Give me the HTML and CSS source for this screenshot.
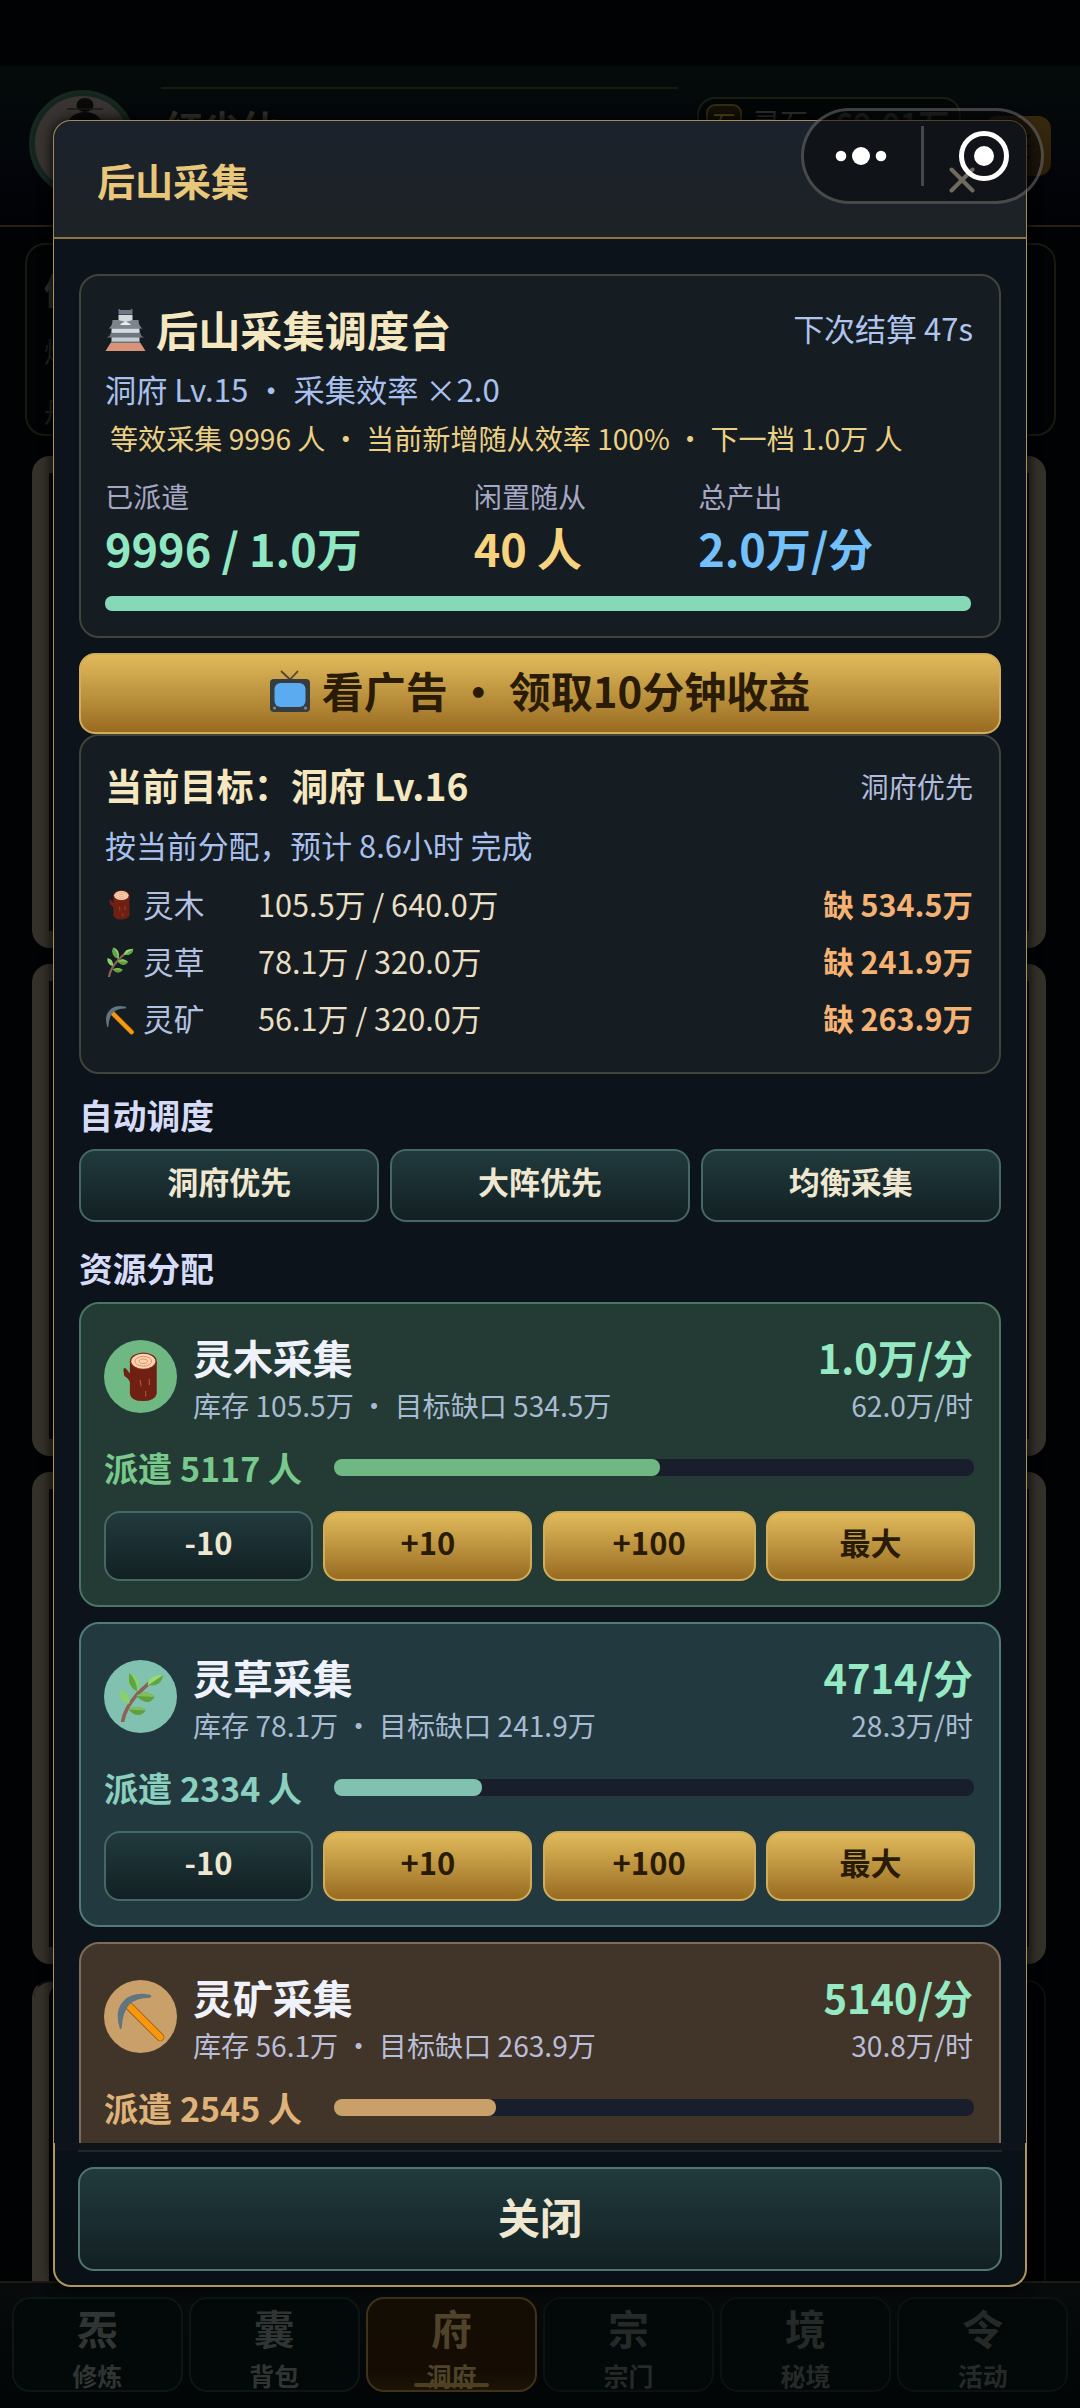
FILE: index.html
```html
<!DOCTYPE html>
<html lang="zh-CN">
<head>
<meta charset="utf-8">
<title>后山采集</title>
<link rel="stylesheet" href="styles.css">
</head>
<body>
<svg class="defs" width="0" height="0" aria-hidden="true">
  <symbol id="log" viewBox="0 0 40 54">
    <path d="M10 26 4 18Q1 16 1 20L2 26Q8 29 10 38Z" fill="#6d2013"/>
    <path d="M8 10V45Q9 53 22 53T37 45V10Z" fill="#6f2012"/>
    <ellipse cx="22.500" cy="10" rx="14.500" ry="9.500" fill="#7c2c1a"/>
    <ellipse cx="22.500" cy="10" rx="13" ry="8" fill="#fbd3b0"/>
    <ellipse cx="22.500" cy="10" rx="9" ry="5.200" fill="none" stroke="#d98d66" stroke-width="1"/>
    <ellipse cx="22.500" cy="10" rx="4.500" ry="2.400" fill="none" stroke="#d98d66" stroke-width="1"/>
    <path d="M19 30q1 6 1 7M29 29v7M25 42v6" stroke="#a5533c" stroke-width="1.300" fill="none"/>
  </symbol>
  <symbol id="herb" viewBox="0 0 46 52">
    <path d="M4 51Q6 38 20 22L31 12" stroke="#8c6257" stroke-width="3.800" fill="none" stroke-linecap="round"/>
    <path d="M19 20Q6 15 11 1Q23 4 21 19Z" fill="#8bd06a"/>
    <path d="M19 20Q19 9 11 1Q8 15 19 20Z" fill="#5da547"/>
    <path d="M30 14Q30 3 46 3Q45 15 30 14Z" fill="#9ed96f"/>
    <path d="M30 14L46 3Q45 15 30 14Z" fill="#5da547"/>
    <path d="M11 33Q0 31 1 19Q12 21 11 33Z" fill="#8bd06a"/>
    <path d="M18 25Q29 17 37 26Q31 37 18 25Z" fill="#5da03d"/>
    <path d="M18 25Q29 17 37 26Z" fill="#83bd58"/>
    <path d="M10 39Q19 33 28 40Q20 50 10 39Z" fill="#5da03d"/>
    <path d="M10 39Q19 33 28 40Z" fill="#83bd58"/>
  </symbol>
  <symbol id="pick" viewBox="0 0 50 52">
    <path d="M12 14 45 47" stroke="#8f5a14" stroke-width="8.600" stroke-linecap="round"/>
    <path d="M12 14 45 47" stroke="#f8970e" stroke-width="7" stroke-linecap="round"/>
    <path d="M3 38Q-3 19 7 9T35 3Q37 5 34 6Q20 6 13 13T5 37Q4 40 3 38Z" fill="#5f7580"/>
  </symbol>
  <symbol id="castle" viewBox="0 0 40 42">
    <path d="M5 34H35L40 42H0Z" fill="#d99379"/>
    <path d="M6 22H34V34H6Z" fill="#c4cdd3"/>
    <path d="M6 32.500H34V34H6Z" fill="#6f757c"/>
    <path d="M1 28.500Q5 27 5 24H35Q35 27 39 28.500Z" fill="#6e7780"/>
    <path d="M3 19.500Q7 17 7 11H33Q33 17 37 19.500Z" fill="#7c858c"/>
    <path d="M6 19.500H34V23H6Z" fill="#d5dade"/>
    <path d="M13 6H27V11L20 13L13 11Z" fill="#d5dade"/>
    <path d="M15 15L20 12.500 25 15V16H15Z" fill="#eceff0"/>
    <path d="M13 0H14L15 1H25L26 0H27V5.500H13Z" fill="#6f7983"/>
  </symbol>
  <symbol id="tv" viewBox="0 0 40 42">
    <path d="M11 1 20 9.500 28 1" fill="none" stroke="#514433" stroke-width="1.800"/>
    <rect y="9" width="40" height="33" rx="4" fill="#373c3f"/>
    <rect x="4.500" y="13" width="31" height="24" rx="6" fill="#5aabef"/>
    <circle cx="4.500" cy="38" r="1.500" fill="#858a8b"/>
    <circle cx="35.500" cy="38" r="1.500" fill="#858a8b"/>
  </symbol>
</svg>

<div class="page">
  <header class="profile">
    <div class="avatar">
      <svg viewBox="0 0 96 96"><path d="M50 96H14Q24 70 30 34Q34 16 50 16T70 34Q76 70 82 96Z" fill="#0a0909"/><ellipse cx="50" cy="9" rx="8.500" ry="7" fill="#0a0909"/><path d="M32 13h36" stroke="#1d1a19" stroke-width="1.500"/></svg>
    </div>
    <div class="profile-info"><div class="rule"></div><div class="nick">红尘仙</div></div>
    <div class="wallet"><span class="coin">石</span><span class="coin-name">灵石</span><b>69.01万</b></div>
    <div class="sign">签</div>
  </header>
  <section class="tips"><b>修炼</b><span>炼丹</span><span>丹药</span></section>
  <section class="scrolls">
    <div class="scroll-card"></div>
    <div class="scroll-card"></div>
    <div class="scroll-card"></div>
    <div class="scroll-card last"></div>
  </section>
  <nav class="tabs">
    <div class="tab"><b>炁</b><span>修炼</span></div>
    <div class="tab"><b>囊</b><span>背包</span></div>
    <div class="tab active"><b>府</b><span>洞府</span></div>
    <div class="tab dim"><b>宗</b><span>宗门</span></div>
    <div class="tab dim"><b>境</b><span>秘境</span></div>
    <div class="tab dim"><b>令</b><span>活动</span></div>
  </nav>
</div>

<div class="modal">
  <div class="modal-head">
    <h1>后山采集</h1>
    <svg class="close" viewBox="0 0 26 26"><path d="M2.500 2.500l21 21M23.500 2.500l-21 21"/></svg>
  </div>
  <div class="modal-body">
    <section class="panel summary">
      <div class="row">
        <h2><svg><use href="#castle"/></svg>后山采集调度台</h2>
        <span class="next">下次结算 47s</span>
      </div>
      <p class="sub">洞府 Lv.15 <i>・</i> 采集效率 ×2.0</p>
      <p class="eff">等效采集 9996 人 <i>・</i> 当前新增随从效率 100% <i>・</i> 下一档 1.0万 人</p>
      <div class="stats">
        <div class="stat mint"><span>已派遣</span><b>9996 / 1.0万</b></div>
        <div class="stat gold"><span>闲置随从</span><b>40 人</b></div>
        <div class="stat blue"><span>总产出</span><b>2.0万/分</b></div>
      </div>
      <div class="total-bar"><div style="width:99.8%"></div></div>
    </section>

    <button class="btn primary ad"><svg><use href="#tv"/></svg>看广告 <i>・</i> 领取10分钟收益</button>

    <section class="panel goal">
      <div class="row">
        <h3>当前目标：洞府 Lv.16</h3>
        <span class="mode">洞府优先</span>
      </div>
      <p class="sub">按当前分配，预计 8.6小时 完成</p>
      <div class="need"><svg><use href="#log"/></svg><span>灵木</span><em>105.5万 / 640.0万</em><b>缺 534.5万</b></div>
      <div class="need"><svg><use href="#herb"/></svg><span>灵草</span><em>78.1万 / 320.0万</em><b>缺 241.9万</b></div>
      <div class="need"><svg><use href="#pick"/></svg><span>灵矿</span><em>56.1万 / 320.0万</em><b>缺 263.9万</b></div>
    </section>

    <h4>自动调度</h4>
    <div class="modes">
      <button class="btn">洞府优先</button>
      <button class="btn">大阵优先</button>
      <button class="btn">均衡采集</button>
    </div>

    <h4 class="second">资源分配</h4>
    <div class="resources">
      <section class="res wood">
        <div class="res-head">
          <div class="badge"><svg><use href="#log"/></svg></div>
          <div class="info"><b>灵木采集</b><span>库存 105.5万 <i>・</i> 目标缺口 534.5万</span></div>
          <div class="rate"><b>1.0万/分</b><span>62.0万/时</span></div>
        </div>
        <div class="sent"><b>派遣 5117 人</b><div class="track"><div style="width:50.9%"></div></div></div>
        <div class="actions"><button class="btn">-10</button><button class="btn primary">+10</button><button class="btn primary">+100</button><button class="btn primary">最大</button></div>
      </section>
      <section class="res grass">
        <div class="res-head">
          <div class="badge"><svg><use href="#herb"/></svg></div>
          <div class="info"><b>灵草采集</b><span>库存 78.1万 <i>・</i> 目标缺口 241.9万</span></div>
          <div class="rate"><b>4714/分</b><span>28.3万/时</span></div>
        </div>
        <div class="sent"><b>派遣 2334 人</b><div class="track"><div style="width:23.2%"></div></div></div>
        <div class="actions"><button class="btn">-10</button><button class="btn primary">+10</button><button class="btn primary">+100</button><button class="btn primary">最大</button></div>
      </section>
      <section class="res ore">
        <div class="res-head">
          <div class="badge"><svg><use href="#pick"/></svg></div>
          <div class="info"><b>灵矿采集</b><span>库存 56.1万 <i>・</i> 目标缺口 263.9万</span></div>
          <div class="rate"><b>5140/分</b><span>30.8万/时</span></div>
        </div>
        <div class="sent"><b>派遣 2545 人</b><div class="track"><div style="width:25.3%"></div></div></div>
      </section>
    </div>
  </div>
  <div class="modal-foot"><div class="foot-inner"><button class="btn">关闭</button></div></div>
</div>

<div class="capsule">
  <svg viewBox="0 0 242 96">
    <g fill="#fff"><circle cx="39" cy="48" r="5.300"/><circle cx="59" cy="48" r="9"/><circle cx="79" cy="48" r="5.300"/><circle cx="182" cy="48" r="10"/></g>
    <circle cx="182" cy="48" r="22.500" fill="none" stroke="#fff" stroke-width="5"/>
    <path d="M120.500 18v60" stroke="#45474a" stroke-width="3"/>
  </svg>
</div>
</body>
</html>
```

FILE: styles.css
```css
* { box-sizing: border-box; }

body {
  margin: 0;
  width: 1080px;
  height: 2408px;
  position: relative;
  overflow: hidden;
  background: #010204;
  font-family: "Noto Sans CJK SC", sans-serif;
}

h1, h2, h3, h4, p { margin: 0; font-weight: 700; white-space: nowrap; }
p { font-weight: 400; }
em, i { font-style: normal; }
svg { display: block; flex: none; }
.defs { position: absolute; }
span, b { white-space: nowrap; }

/* dimmed page behind the dialog */
.page { display: flex; flex-direction: column; height: 2408px; padding-top: 66px; }

.profile {
  display: flex;
  height: 161px;
  flex: none;
  padding-left: 29px;
  border-bottom: 2px solid #2a1f10;
  background: linear-gradient(#050b0b, #020409 70%, #010205);
}
.avatar {
  width: 107px;
  height: 107px;
  margin-top: 24px;
  border: 2px solid #17261c;
  border-radius: 50%;
  background: #393432;
  box-shadow: inset 0 0 0 4px #12261f;
  padding: 4px;
}
.avatar svg { width: 96px; height: 96px; border-radius: 50%; }
.profile-info { margin: 21px 0 0 25px; width: 517px; }
.rule { height: 2px; background: #151b10; }
.nick { margin: 10px 0 0 4px; font-size: 38px; line-height: 56px; font-weight: 700; color: #36332c; }
.wallet {
  display: flex;
  align-items: center;
  width: 264px;
  height: 50px;
  margin: 31px 0 0 19px;
  padding-left: 7px;
  border: 2px solid #1b1c13;
  border-radius: 18px;
  background: #020607;
  color: #2d2f28;
  font-size: 28px;
}
.coin {
  width: 36px;
  height: 36px;
  border: 2px solid #332a13;
  border-radius: 9px;
  background: #131006;
  color: #5a481d;
  font-size: 23px;
  line-height: 32px;
  text-align: center;
}
.coin-name { margin: 0 27px 0 10px; }
.wallet b { font-size: 31px; color: #3a3a33; }
.sign {
  width: 67px;
  height: 60px;
  margin: 50px 0 0 23px;
  border-radius: 13px;
  background: linear-gradient(#37290e, #2c1e07);
  color: #0b0801;
  font-size: 28px;
  font-weight: 700;
  line-height: 58px;
  text-align: center;
}

.tips {
  display: flex;
  flex-direction: column;
  flex: none;
  height: 193px;
  margin: 16px 24px 0 25px;
  padding: 18px 0 0 17px;
  border: 2px solid #1b1811;
  border-radius: 20px;
  background: #020304;
  color: #22241f;
  font-size: 28px;
}
.tips b { font-size: 36px; line-height: 52px; color: #302f28; }
.tips span { line-height: 60px; margin-top: 6px; }
.tips span + span { margin-top: 0; }

.scrolls { flex: 1; min-height: 0; overflow: hidden; display: flex; flex-direction: column; gap: 16px; padding: 20px 34px 0 32px; }
.scroll-card {
  flex: none;
  height: 492px;
  border: 17px solid #34302a;
  border-radius: 18px;
  background: #000;
  box-shadow: inset 0 0 0 2px #0a0903;
}
.last { border: 2px solid #0c0d0e; border-left-color: #34302a; box-shadow: inset 15px 0 0 #34302a; }

.tabs {
  display: grid;
  grid-template-columns: repeat(6, 1fr);
  gap: 6.500px;
  flex: none;
  height: 127px;
  padding: 14px 12px 16px;
  border-top: 2px solid #1d1913;
  background: linear-gradient(#070b0b, #020505);
}
.tab {
  display: flex;
  flex-direction: column;
  align-items: center;
  height: 95px;
  border: 2px solid #0d1615;
  border-radius: 18px;
  background: #030808;
  color: #303534;
  position: relative;
}
.tab b { font-size: 41px; line-height: 56px; }
.tab span { margin-top: 1px; font-size: 25px; line-height: 38px; font-weight: 700; }
.tab.dim { color: #252a29; border-color: #0b1211; }
.tab.active { color: #4f432a; border-color: #40321a; background: linear-gradient(#140d03, #150d04 80%, #1d1305); }
.tab.active::after { content: ""; position: absolute; left: 46px; bottom: 3px; width: 75px; height: 4px; border-radius: 2px; background: #4f4020; }

/* dialog */
.modal {
  position: absolute;
  left: 53px;
  top: 120px;
  width: 974px;
  height: 2167px;
  display: flex;
  flex-direction: column;
  border-radius: 18px;
  box-shadow: 0 0 14px #000;
}
.modal-head {
  display: flex;
  align-items: center;
  justify-content: space-between;
  height: 119px;
  flex: none;
  padding: 2px 51px 0 43px;
  border: 1px solid #a08c58;
  border-bottom: 2px solid #8e7444;
  border-radius: 18px 18px 0 0;
  background: linear-gradient(#1c222c, #1c2225);
}
h1 { font-size: 38px; color: #e9c77a; line-height: 56px; }
.close { width: 26px; height: 26px; stroke: #f0e3c6; stroke-width: 4; stroke-linecap: round; }

.modal-body {
  height: 1904px;
  flex: none;
  overflow: hidden;
  padding: 35px 25px 0;
  border: solid #a8935c;
  border-width: 0 1px;
  background: #0d131a;
}
.row { display: flex; justify-content: space-between; }
.panel { padding: 24px 26px 25px 24px; border: 2px solid #42433b; border-radius: 20px; background: #151d22; }

.summary { height: 364px; }
h2 { display: flex; align-items: center; font-size: 42.200px; line-height: 57px; color: #f5e7c0; }
h2 svg { width: 41px; height: 42px; margin: 3px 10px 0 0; }
.next { font-size: 31px; line-height: 55px; color: #b0c4ee; }
.sub { font-size: 31.200px; line-height: 44px; margin-top: 10px; color: #a9c0ef; }
.eff { font-size: 28.100px; line-height: 42px; margin: 6px 0 0 5px; color: #ecd084; }
.stats { display: flex; gap: 112px; margin-top: 16px; }
.stat { display: flex; flex-direction: column; }
.stat span { font-size: 28.100px; line-height: 42px; color: #a6a7c4; }
.stat b { font-size: 45px; line-height: 61px; }
.mint b { color: #8fe8c2; }
.gold b { color: #f7d37f; }
.blue b { color: #74c0fb; }
.total-bar { height: 15px; margin-top: 18px; }
.total-bar div { height: 15px; border-radius: 7px; background: #86d9b7; }

.btn {
  display: flex;
  align-items: center;
  justify-content: center;
  padding: 0 0 8px;
  border: 2px solid #466865;
  border-radius: 16px;
  background: linear-gradient(#213a3d, #122023);
  color: #efe7d0;
  font: 700 31px/44px "Noto Sans CJK SC", sans-serif;
  white-space: pre;
}
.btn.primary { border-color: #d0ad5a; background: linear-gradient(#e1ba5b, #bd943f 50%, #996b21); color: #2a1b06; }
.ad { width: 100%; height: 81px; margin-top: 15px; padding-bottom: 9px; font-size: 42px; line-height: 57px; }
.ad svg { width: 40px; height: 42px; margin: 3px 12px 0 0; }

.goal { height: 340px; }
h3 { font-size: 37.200px; line-height: 51px; color: #f5e7c0; }
.mode { font-size: 28.100px; line-height: 51px; color: #b0bbdd; }
.goal .sub { font-size: 30.900px; margin: 12px 0 8px; }
.need { display: grid; grid-template-columns: 38px 115px 1fr auto; align-items: center; height: 57px; font-size: 30.700px; line-height: 44px; }
.need svg { width: 30px; height: 30px; margin-top: 3px; }
.need span { color: #b4c2e2; }
.need em { color: #e8dfc4; }
.need b { font-size: 30.500px; color: #f6b272; }
.need:last-child { padding-top: 1px; }

h4 { margin-top: 17px; font-size: 33.750px; line-height: 50px; color: #d6dcf7; }
.goal + h4 { margin-top: 16px; }
.second { margin-top: 21px; }
.modes { display: grid; grid-template-columns: repeat(3, 1fr); gap: 10.500px; margin-top: 9px; }
.modes .btn { height: 73px; padding-bottom: 10px; }
h4.second { margin-top: 21px; }

.resources { display: flex; flex-direction: column; gap: 15px; margin-top: 9px; }
.res { height: 305px; flex: none; padding: 26px 24px 0 23px; border: 2px solid; border-radius: 20px; }
.wood { background: #233b34; border-color: #4a7560; --tone: #6fb783; --label: #78c98b; }
.grass { background: #223a3f; border-color: #517b7a; --tone: #80c1b0; --label: #8bd0bf; }
.ore { background: #413429; border-color: #7b6c5b; --tone: #c9a06a; --label: #dfb27a; }
.res-head { display: flex; align-items: center; height: 96px; }
.badge { width: 73px; height: 73px; margin-bottom: 3px; border-radius: 50%; background: var(--tone); display: flex; align-items: center; justify-content: center; }
.badge svg { width: 50px; height: 50px; }
.info, .rate { display: flex; flex-direction: column; }
.info { margin-left: 16px; flex: 1; }
.rate { align-items: flex-end; margin-right: 2px; }
.info b, .rate b { font-size: 39.900px; line-height: 54px; color: #eff2fb; }
.rate b { color: #95eac3; }
.info span, .rate span { font-size: 28.100px; line-height: 42px; color: #a9bbd2; }
.ore span { color: #b9bed8; }
.sent { display: flex; align-items: center; justify-content: space-between; height: 48px; margin-top: 17px; padding-right: 1px; }
.sent b { font-size: 34.100px; line-height: 48px; color: var(--label); }
.track { width: 640px; height: 17px; border-radius: 8px; background: #181e2c; }
.track div { height: 17px; border-radius: 8px; background: var(--tone); }
.actions { display: grid; grid-template-columns: 209px 209px 213px 209px; justify-content: space-between; margin-top: 20px; }
.actions .btn { height: 70px; }

.modal-foot {
  flex: none;
  height: 144px;
  border: 2px solid #b1965a;
  border-top: 0;
  border-radius: 0 0 18px 18px;
  padding: 7px 23px 0;
  background: linear-gradient(#10141a 8px, #091218 8px, #091117);
}
.foot-inner { border-top: 2px solid #22282a; padding-top: 15px; }
.foot-inner .btn { width: 924px; height: 104px; padding-bottom: 8px; font-size: 42.200px; line-height: 57px; border-color: #507572; }

/* mini-program capsule, floats above everything */
.capsule { position: absolute; left: 801px; top: 108px; width: 243px; height: 96px; border: 3px solid rgba(255,255,255,.23); border-radius: 48px; background: rgba(7,7,10,.55); }
.capsule svg { width: 242px; height: 96px; margin: -3px 0 0 -2px; }
```
